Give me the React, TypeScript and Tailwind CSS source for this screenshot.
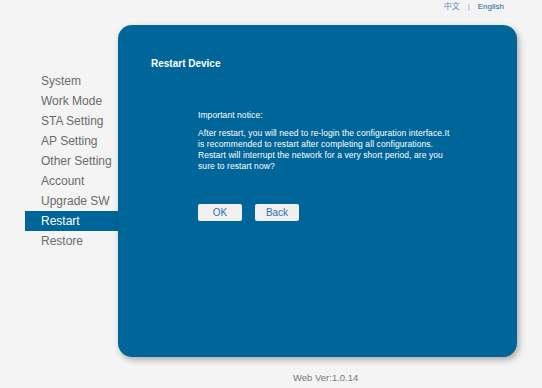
const menu = ["System", "Work Mode", "STA Setting", "AP Setting", "Other Setting", "Account", "Upgrade SW", "Restart", "Restore"];

export default function App() {
  return (
    <div
      className="w-[542px] h-[388px] bg-[#f4f4f4] overflow-hidden"
      style={{ fontFamily: '"Liberation Sans", Arial, "Noto Sans CJK SC", sans-serif' }}
    >
      {/* language switch */}
      <div className="h-[25px] flex justify-end items-start pt-[2px] pr-[38px] text-[8px] leading-[10px]">
        <span className="text-[#5a8cc4]">中文</span>
        <span className="text-[#8aa6c4] mx-[8px]">|</span>
        <span className="text-[#1d5fa6]">English</span>
      </div>

      <div className="flex">
        {/* sidebar */}
        <div className="w-[118px] pl-[25px] pt-[46px]">
          {menu.map((m) => (
            <div
              key={m}
              className={
                m === "Restart"
                  ? "h-[20px] leading-[20px] pl-[16px] text-[12px] bg-[#006699] text-white"
                  : "h-[20px] leading-[20px] pl-[16px] text-[12px] text-[#6b6b6b]"
              }
            >
              {m}
            </div>
          ))}
        </div>

        {/* main panel */}
        <div className="w-[399px] h-[332px] rounded-[14px] bg-[#006699] shadow-[2px_3px_6px_rgba(0,0,0,0.3)] text-white">
          <div className="pl-[33px] pt-[33px] text-[10px] font-bold leading-[12px]">Restart Device</div>
          <div className="ml-[80px] mt-[40px] w-[256px] text-[8.5px] leading-[11px] tracking-[0.08px]">
            <p>Important notice:</p>
            <p className="mt-[7px]">
              After restart, you will need to re-login the configuration interface.It is recommended to restart after completing all configurations. Restart will interrupt the network for a very short period, are you sure to restart now?
            </p>
          </div>
          <div className="pl-[80px] pt-[32px] flex gap-[13px]">
            <button className="w-[44px] h-[17px] rounded-[2px] bg-[#f0f0f0] text-[#2f70b0] text-[10px] leading-[17px]">OK</button>
            <button className="w-[44px] h-[17px] rounded-[2px] bg-[#f0f0f0] text-[#2f70b0] text-[10px] leading-[17px]">Back</button>
          </div>
        </div>
      </div>

      <div className="pl-[293px] pt-[15px] text-[9.5px] leading-[12px] text-[#777]">Web Ver:1.0.14</div>
    </div>
  );
}
